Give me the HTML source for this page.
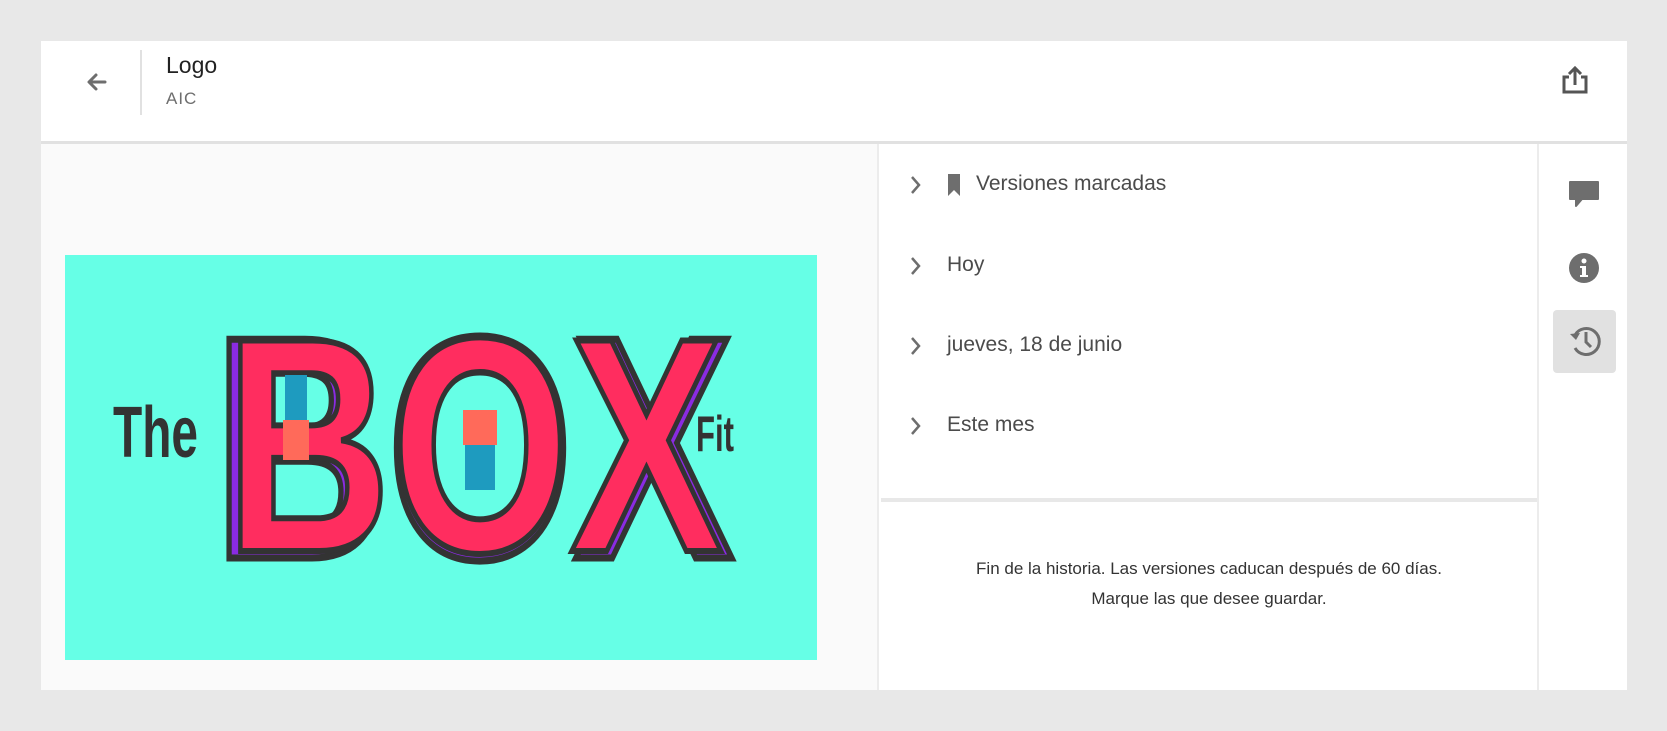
<!DOCTYPE html>
<html><head><meta charset="utf-8"><style>
*{margin:0;padding:0;box-sizing:border-box}
body{width:1667px;height:731px;background:#e8e8e8;font-family:"Liberation Sans",sans-serif;position:relative;overflow:hidden}
.card{position:absolute;left:41px;top:41px;width:1586px;height:649px;background:#fff;overflow:hidden}
.hdr{position:absolute;left:0;top:0;width:1586px;height:103px;border-bottom:3px solid #e1e1e1}
.abs{position:absolute}
.row{position:absolute;left:0;font-size:21px;color:#4b4b4b;white-space:nowrap}
</style></head><body>
<div class="card">
 <div class="hdr">
  <svg class="abs" style="left:44px;top:30px" width="24" height="22" viewBox="0 0 24 22"><path d="M20 11H5M11 4L4 11l7 7" fill="none" stroke="#6e6e6e" stroke-width="3" stroke-linecap="round" stroke-linejoin="round"/></svg>
  <div class="abs" style="left:99px;top:9px;width:2px;height:65px;background:#e1e1e1"></div>
  <div class="abs" style="left:125px;top:11px;font-size:23px;color:#222">Logo</div>
  <div class="abs" style="left:125px;top:48px;font-size:17px;color:#6e6e6e;letter-spacing:1px">AIC</div>
  <svg class="abs" style="left:1519px;top:24px" width="30" height="30" viewBox="0 0 30 30"><path d="M9 12H4v15h22V12h-5" fill="none" stroke="#555" stroke-width="3"/><path d="M15 20V4M9 9l6-6 6 6" fill="none" stroke="#555" stroke-width="3"/></svg>
 </div>
 <div class="abs" style="left:0;top:103px;width:838px;height:546px;background:#fafafa;border-right:2px solid #ececec"></div>
 <svg class="abs" style="left:24px;top:214px" width="752" height="405" viewBox="0 0 752 405">
  <rect width="752" height="405" fill="#66ffe6"/>
  <text x="48" y="202" font-family="Liberation Sans" font-weight="bold" font-size="72" fill="#333" textLength="85" lengthAdjust="spacingAndGlyphs">The</text>
  <text x="148" y="303" font-family="Liberation Sans" font-weight="bold" font-size="318" fill="#8a2be2" stroke="#333" stroke-width="7" textLength="521" lengthAdjust="spacingAndGlyphs">BOX</text>
  <text x="160" y="296" font-family="Liberation Sans" font-weight="bold" font-size="306" fill="#ff2d5f" stroke="#333" stroke-width="6" textLength="498" lengthAdjust="spacingAndGlyphs">BOX</text>
  <text x="631" y="196" font-family="Liberation Sans" font-weight="bold" font-size="50" fill="#333" textLength="38" lengthAdjust="spacingAndGlyphs">Fit</text>
  <rect x="220" y="120" width="22" height="45" fill="#1e9bbf"/><rect x="218" y="165" width="26" height="40" fill="#ff6a5a"/>
  <rect x="400" y="190" width="30" height="45" fill="#1e9bbf"/><rect x="398" y="155" width="34" height="35" fill="#ff6a5a"/>
 </svg>
 <div class="abs" style="left:840px;top:103px;width:658px;height:546px;border-right:2px solid #ececec">
  <div class="abs" style="left:0;top:354px;width:656px;height:4px;background:#e8e8e8"></div>
 </div>
 <svg class="abs" style="left:868px;top:133px" width="14" height="270" viewBox="0 0 14 270">
  <g fill="none" stroke="#6e6e6e" stroke-width="2.5"><path d="M3 3l7 8-7 8"/><path d="M3 84l7 8-7 8"/><path d="M3 164l7 8-7 8"/><path d="M3 244l7 8-7 8"/></g>
 </svg>
 <svg class="abs" style="left:907px;top:133px" width="12" height="22" viewBox="0 0 12 22"><path d="M0 0h12v22l-6-6-6 6z" fill="#6e6e6e"/></svg>
 <div class="row" style="left:935px;top:131px">Versiones marcadas</div>
 <div class="row" style="left:906px;top:212px">Hoy</div>
 <div class="row" style="left:906px;top:292px">jueves, 18 de junio</div>
 <div class="row" style="left:906px;top:372px">Este mes</div>
 <div class="abs" style="left:840px;top:513px;width:656px;text-align:center;font-size:17px;line-height:30px;color:#333">Fin de la historia. Las versiones caducan después de 60 días.<br>Marque las que desee guardar.</div>
 <svg class="abs" style="left:1527px;top:137px" width="32" height="32" viewBox="0 0 32 32"><path d="M2 4h28v17H14l-6 7v-7H2z" fill="#6e6e6e" stroke="#6e6e6e" stroke-width="2" stroke-linejoin="round"/></svg>
 <svg class="abs" style="left:1527px;top:211px" width="32" height="32" viewBox="0 0 32 32"><circle cx="16" cy="16" r="15" fill="#6e6e6e"/><circle cx="16" cy="9" r="2.5" fill="#fff"/><path d="M12 14h6v9h2v2h-8v-2h2v-7h-2z" fill="#fff"/></svg>
 <div class="abs" style="left:1512px;top:269px;width:63px;height:63px;background:#e1e1e1;border-radius:4px"></div>
 <svg class="abs" style="left:1527px;top:283px" width="34" height="34" viewBox="0 0 34 34"><path d="M7 11A13 13 0 1 1 7 24" fill="none" stroke="#6e6e6e" stroke-width="3"/><path d="M2 10l6 6 4-7z" fill="#6e6e6e"/><path d="M18 8v10l5 5" fill="none" stroke="#6e6e6e" stroke-width="3"/></svg>
</div>
</body></html>
